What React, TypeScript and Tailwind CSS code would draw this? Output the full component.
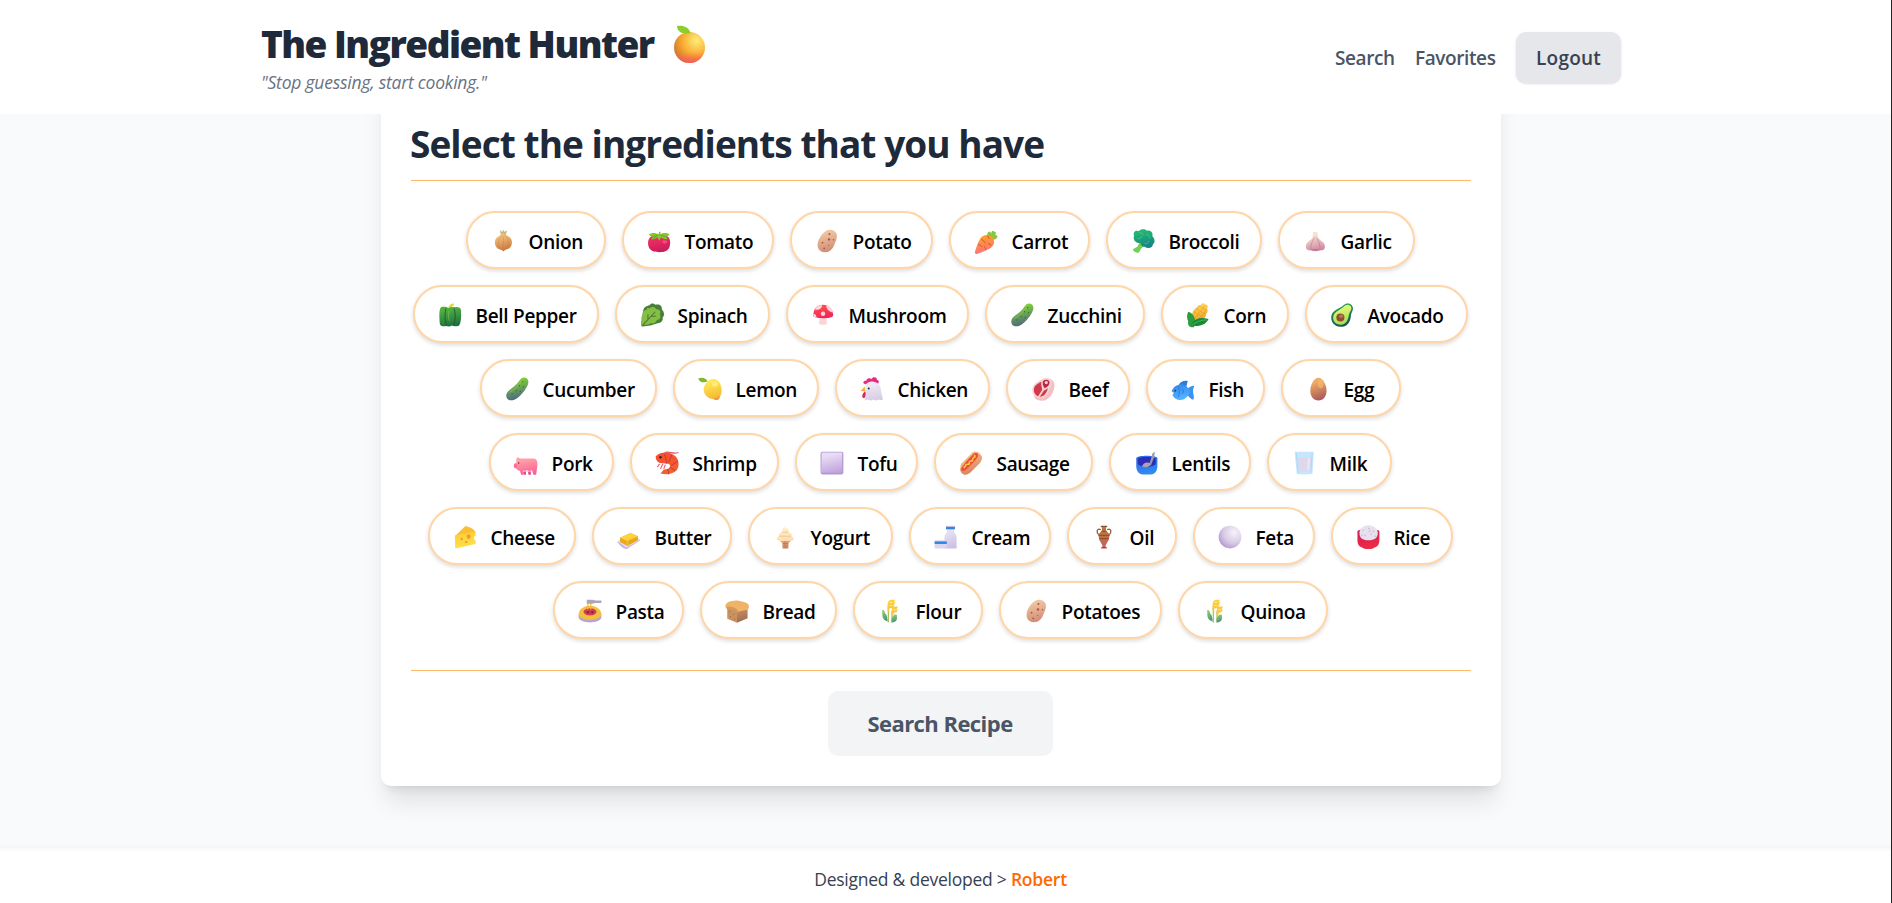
import type { ReactNode } from "react";

const gradients: [string, string, string][] = [
  ["onion", "#f2c079", "#c9733c"],
  ["tomato", "#f0305f", "#c91a5e"],
  ["potato", "#eec3a0", "#cf8a75"],
  ["carrot", "#ff9b2f", "#ff6f86"],
  ["broccoli", "#22b573", "#14808a"],
  ["garlic", "#f6e3d3", "#cf86a3"],
  ["pepper", "#4fae3e", "#1d6d3f"],
  ["cap", "#ff4a4a", "#f0245c"],
  ["cucumber", "#7ccc3a", "#4b5f86"],
  ["corn", "#ffd35a", "#f0a020"],
  ["avocado", "#1f9a4a", "#1c4e63"],
  ["flesh", "#e4f57a", "#a5dc52"],
  ["lemon", "#ffe65a", "#f5b52a"],
  ["chicken", "#efe8f5", "#d5cce2"],
  ["fish", "#3a8ff2", "#55b9ff"],
  ["egg", "#f0ac62", "#a8585a"],
  ["pork", "#ffa0a8", "#fb5f92"],
  ["shrimp", "#f4502f", "#f0642f"],
  ["tofu", "#e9dcf5", "#c0a4dc"],
  ["bun", "#f2b07a", "#d9805f"],
  ["bowl", "#2f6bea", "#2f8ff0"],
  ["cheese", "#ffd03a", "#ffe04f"],
  ["cone", "#e8a878", "#c9805a"],
  ["cream", "#fff0c8", "#ffdcb0"],
  ["jar", "#e6e0f2", "#cbbfe6"],
  ["oil", "#b9783c", "#c8605a"],
  ["rice", "#d61f50", "#f02a45"],
  ["bread", "#c08a60", "#9c6a52"],
  ["wheat", "#ffd23a", "#f3bb3a"],
  ["leaf", "#8bc46a", "#3f8f86"],
];

function Defs() {
  return (
    <svg className="absolute h-0 w-0" aria-hidden="true">
      <defs>
        {gradients.map(([id, from, to]) => (
          <linearGradient key={id} id={id} x1="0.35" y1="0" x2="0.6" y2="1">
            <stop offset="0.15" stopColor={from} />
            <stop offset="1" stopColor={to} />
          </linearGradient>
        ))}
        <radialGradient id="orange" cx="0.72" cy="0.28" r="0.85">
          <stop offset="0" stopColor="#ffee78" />
          <stop offset="0.55" stopColor="#f9a930" />
          <stop offset="1" stopColor="#c8702e" />
        </radialGradient>
        <linearGradient id="blush" x1="0" y1="0" x2="0" y2="1">
          <stop offset="0.65" stopColor="#ff5f5f" stopOpacity="0" />
          <stop offset="1" stopColor="#ff5560" stopOpacity="0.85" />
        </linearGradient>
        <radialGradient id="pearl" cx="0.68" cy="0.3" r="0.75">
          <stop offset="0" stopColor="#f6f2f9" />
          <stop offset="0.6" stopColor="#d8cde6" />
          <stop offset="1" stopColor="#b79bd2" />
        </radialGradient>
      </defs>
    </svg>
  );
}

const potato = (
  <>
    <path d="M15 3.500C19 1 25.500 2 27.500 6.500C29.500 11 27 16 25 20.500C23 26 19 30 13 29.700C7 29.500 3.500 24.500 4.500 19C5.500 13.500 9.500 7 15 3.500Z" fill="url(#potato)" />
    <g fill="#a8583c">
      <circle cx="19" cy="7.500" r="1.200" />
      <circle cx="18.500" cy="14" r="1.500" />
      <circle cx="24" cy="14.500" r="1" />
      <circle cx="10.500" cy="18" r="1.100" />
      <circle cx="12.500" cy="25" r="1.100" />
      <circle cx="18" cy="21.500" r="0.700" />
    </g>
  </>
);

const cucumber = (
  <>
    <path d="M19.500 5C22 1.500 26 1 28.500 3.500C31 6 30 10 28 13.500C25 19 21 23.500 16.500 27C12 30.500 7 31 4 28C1.500 25 3 20 6.500 17.500C12 13.500 16 10.500 19.500 5Z" fill="url(#cucumber)" />
    <g fill="#2f6b34">
      <circle cx="23" cy="7" r="0.800" />
      <circle cx="19" cy="12" r="0.800" />
      <circle cx="24" cy="13" r="0.800" />
      <circle cx="15" cy="18" r="0.800" />
      <circle cx="20" cy="19" r="0.800" />
      <circle cx="10" cy="22" r="0.800" />
    </g>
    <path d="M22 5C18 12 14 16 7 20" stroke="#9fda5a" strokeWidth="1" fill="none" opacity="0.6" />
  </>
);

const wheat = (
  <>
    <path d="M14 30V10M18.500 30V16" stroke="#a9c45a" strokeWidth="1.600" />
    <path d="M6.500 15C8 14 9.500 16 10 19C12 20 13 24 13 29C9 28 6.500 25 6.500 21Z" fill="url(#leaf)" />
    <path d="M18 30C17.500 26 18 23 20 22C21 20 23 20 24.500 21V26C23.500 29 21 30 18 30Z" fill="url(#leaf)" />
    <path d="M13 16V8C13 4 15 2 18 2H22C22 4 21 5 19 5H22C22 7.500 21 9 18.500 9H21C21 11 19.500 12.500 17 12.500L15 13V18Z" fill="url(#wheat)" />
    <path d="M18 21V15C18 12 20 10.500 22 10.500H25.500C25.500 12.500 24.500 13.500 23 14H25.500C25.500 16.500 23.500 18 21 18L20 21Z" fill="#f9c846" />
    <path d="M15.500 5.500H19M15.500 9.500H18.500M20 14.500H23" stroke="#fff0b0" strokeWidth="1" />
  </>
);

const art: Record<string, ReactNode> = {
  onion: (
    <>
      <path d="M12 2.500L15 5L16.500 2L18 5L21 2.500L19.500 9H13.500Z" fill="#d3b37a" />
      <path d="M16.500 6C18 9 27 9.500 27 17.500C27 24 22.500 26.500 18.500 27L16.500 29L14.500 27C10.500 26.500 6 24 6 17.500C6 9.500 15 9 16.500 6Z" fill="url(#onion)" />
      <path d="M15 9C9 14 9 22 14 26M18 9C24 14 24 22 19 26M16.500 10V26" stroke="#b7703a" strokeWidth="0.800" fill="none" opacity="0.450" />
    </>
  ),
  tomato: (
    <>
      <path d="M7 10C12 7 21 7 26 10C30 12 30.500 18 29 23C27.500 28 23 29.700 16.500 29.700C10 29.700 5 28 3.300 23C1.800 18 2.500 12 7 10Z" fill="url(#tomato)" />
      <ellipse cx="23" cy="17" rx="3" ry="2" fill="#ff7294" opacity="0.550" />
      <path d="M15.500 8L16 4.500H18L17.500 8C21 5.500 26 6 29 8C27.500 10 25.500 10.500 24 10.500L27 13.500C23 14.500 20 13 18.500 11.500L16.500 15.500L13.500 11.500C11 14 8 14.500 6.500 13.500L9 10.500C6 10.500 4.500 9.500 3.500 8C7 5.500 12 5.500 15.500 8Z" fill="#82c930" />
      <path d="M9 10.500L14 9L9 13M18 9L24 10.500" stroke="#4d9c28" strokeWidth="0.800" fill="none" />
    </>
  ),
  potato,
  carrot: (
    <>
      <path d="M19 13C17 9 17 5 20 4.500C21 4 22 6 22.500 7C22.500 3.500 25 2.500 26 4.500C28.500 4.500 29 7 27 8.500C30 8.500 31 11 29 12.500C26 15 23 15 19 13Z" fill="#86c83b" />
      <path d="M9 13C12 8 19 7 23.500 11.500C28 16 26 22 21 25C14 29 8 31 4.500 32C2.500 32 2 31 2.500 29C4 24 6 18 9 13Z" fill="url(#carrot)" />
      <path d="M11 14L15 18M18 10L20 13M7 20L11 23M19 19L22 21M14 23L16 26" stroke="#db6230" strokeWidth="1.300" strokeLinecap="round" />
    </>
  ),
  broccoli: (
    <>
      <path d="M13 15L20 20L14 25L11 30C9 31.500 4 29 3.500 26L9 23Z" fill="#74cf58" />
      <path d="M5 9C3 5 8 2 11 4C13 1 19 1 20.500 3.500C25 2 29 6 27.500 10C31 13 31 18 28.500 19.500C28 25 22 26 18 23C15 23 13 21 13 18C8 20 3 15 5 9Z" fill="url(#broccoli)" />
      <path d="M11 6C14 5 16 7 16 9M20 8C24 8 25 11 24 13M9 13C12 14 14 12 14 10M18 19C20 20 23 18 23 16" stroke="#58cf93" strokeWidth="1.100" fill="none" opacity="0.700" />
    </>
  ),
  garlic: (
    <>
      <path d="M13.500 5H19L19.500 12C23 16 27 17 28 21.500C29 26 26 28 22 27.500C18 28.500 14 28.500 10.500 27.500C6 28 4 25 5 21C6 17 11 15 13 12Z" fill="url(#garlic)" />
      <path d="M15 12C13 17 10 20 11 27M18 12C20 17 23 20 22 27" stroke="#a96c80" strokeWidth="1" fill="none" opacity="0.600" />
      <path d="M11 27.500C12 25 20 25 22 27.500C19 29 14 29 11 27.500Z" fill="#b96a8c" opacity="0.600" />
    </>
  ),
  pepper: (
    <>
      <path d="M14 8C14 5 16 2 20 1.500L21 4C18.500 5 18 6 18 9Z" fill="#d7df35" />
      <path d="M5 6.500C8 5.500 12 6 14 7.500C17 6 20 6 22 6.500C25 5.500 29.500 6.500 29.500 10C30 18 29.500 29 26 29.500C23 30 20 30 18.500 29C16 30.500 14 30.500 12 29.500C8 30.500 4 30 3.500 27C3 20 2 9 5 6.500Z" fill="url(#pepper)" />
      <path d="M11 8C9.500 15 9.500 23 12 29M21 8C23 15 23 23 20 29" stroke="#175a34" strokeWidth="1.300" fill="none" opacity="0.8" />
      <path d="M15 11C14 15 14 19 15 23" stroke="#85d666" strokeWidth="1" fill="none" opacity="0.600" />
    </>
  ),
  spinach: (
    <>
      <path d="M13 4C15 0.500 19 2 20 3.500C25 2 29 5 28 9C31 12 32 17 29 19C30 23 27 26 23 26L14 29L4 30C1.500 28 3 26 3 24L5 11C6 6 9 5 13 4Z" fill="#467f3a" />
      <path d="M13 8C16 5 20 6 21 9C25 8 28 12 25.500 15C28 19 25 22 22 22C21 26 17 27 14.500 26C11 28 8 28 6 28L3 30.500C1.500 27 3 25 4 23C2 20 3 17 5 16C3.500 12 7 9 9.500 10C9 7 11 6.500 13 8Z" fill="#85bd45" />
      <path d="M4 29L20 12M11 22V15M15 17.500H21" stroke="#477b2e" strokeWidth="1.300" fill="none" />
    </>
  ),
  mushroom: (
    <>
      <path d="M12 18H20L21 26C20.500 28.500 11.500 28.500 11 26Z" fill="#fbd6d5" />
      <path d="M4 17C4 8 9 3.500 16 3.500C23 3.500 28.500 9 28.500 16.500C28.500 21 4 21 4 17Z" fill="url(#cap)" />
      <path d="M6 9C9 4 12 4 15 4C15 8 10 11 6 9ZM20 4C25 6 28 9 28.500 13C24 12 20 9 20 4ZM4 15C6 14 8 16 8 19C5 19 4 18 4 15Z" fill="#ffd4df" />
      <circle cx="16" cy="14.500" r="2.700" fill="#ffd4df" />
    </>
  ),
  cucumber,
  corn: (
    <>
      <path d="M14 7C16 3 18 4 19 4C21 1 24 1 25 3C28 3 29 6 27 8C29 11 27 14 26 15C26 19 22 22 16 24L9 19C8 14 10 9 14 7Z" fill="url(#corn)" />
      <path d="M13 8L25 15M18 5L26 10M11 12L22 19M25 4L12 20M27 9L17 21M19 4L10 15" stroke="#d88b18" strokeWidth="0.700" opacity="0.7" />
      <path d="M4 12C9 13 12 18 13 24L11 31C5 32 3 28 4 24C2 20 2 16 4 12Z" fill="#2c9c3d" />
      <path d="M8 27C12 20 20 18 29 21C26 28 17 31 8 29Z" fill="#148a3d" />
      <path d="M9 28C15 24 20 22 27 22" stroke="#59ba49" fill="none" />
    </>
  ),
  avocado: (
    <>
      <path d="M18 4C21 1 26 1.500 28 4C30.500 7 29.500 10 28 13C26.500 16 27.500 18 26 22C24 28 19 31 14 30.500C6 30 1.500 23.500 3 16.500C4.500 10 12 9 18 4Z" fill="url(#avocado)" />
      <path d="M19 5C22 2.500 25.500 3.500 27 5.500C28.500 8 27 10 25.500 13C24 16 24.500 18 23 21.500C21 26.500 17 28.500 13.500 28C7 27.500 4 22 5.500 17C7 11.500 14 10 19 5Z" fill="url(#flesh)" />
      <circle cx="14" cy="19" r="5" fill="#89512f" />
      <ellipse cx="15" cy="17.500" rx="2.500" ry="2" fill="#b57a58" />
    </>
  ),
  lemon: (
    <>
      <path d="M11 9C14 3 22 2 26 6C30 10 31 16 30 21C29 25 28 26 27.500 28C26 30 23 30 21 28.500C15 28 10 25 8.500 19C7.500 15 9 12 11 9Z" fill="url(#lemon)" />
      <path d="M20 28C23 27.500 26 26 27.500 24C28 29 24 31.500 20 28Z" fill="#ee9656" />
      <ellipse cx="22" cy="10" rx="3.500" ry="3" fill="#fff37e" opacity="0.800" />
      <path d="M13 6.500C9 9 3 8 1.500 3C6 1 11 2 13 6.500Z" fill="#7fb82b" />
    </>
  ),
  chicken: (
    <>
      <path d="M8 10C3 9 6 5 9 6C9 2 14 2 15 4C17 0 23 1 22 5C25 5 25 8 23 10L19 12Z" fill="#e9297f" />
      <path d="M7 13L2 18.500L8 19Z" fill="#f9b22d" />
      <path d="M7 19C4 22 3 25 5 27C8 28 9 23 8.500 20Z" fill="#dc285f" />
      <path d="M8 12C9 8 14 6.500 18 7C25 8 27 13 27 18L29.500 29C27 31 25 29 24 29C22 31 20 30 18 29C15 31 12 30 11 29L7 30C8 26 8.500 23 8 19Z" fill="url(#chicken)" />
      <circle cx="12" cy="15.500" r="1.200" fill="#2f2338" />
    </>
  ),
  beef: (
    <>
      <path d="M15 4C20 1 29 3 30 10C31 18 24 31 14 30.500C9 30 6 29 5 25Z" fill="#f4bfc2" />
      <path d="M15 4C18 2 24 2 26 6C28 11 25 14 23 18C21 25 16 28 10 27C4 25 2 20 3 15C4 10 9 7 15 4Z" fill="#f7d3cf" />
      <path d="M14 7C11 8.500 6 11 5 15C4 19 6 23 10 25L15 17C15 14 13 11 14 7Z" fill="#d2374c" />
      <path d="M17 18L22 15C20 22 17 25 12 25.500Z" fill="#d2374c" />
      <path d="M16 6C20 3.500 24 5 24 8C24 11 21 14 18 15C16 12 15 9 16 6Z" fill="#b8254a" />
      <circle cx="20" cy="8" r="2" fill="#f7d3cf" />
    </>
  ),
  fish: (
    <>
      <path d="M11 11C12 7 17 5 22 6C20.500 9 21 11 20 13Z" fill="#2b7be0" />
      <path d="M20 18C22 14 26 12 30 12C28 16 28.500 18 28.500 20C28.500 22 30 26 29 29C26 29 23 25 20 22Z" fill="#3a93f0" />
      <path d="M2 19C4 13 9 10 15 10.500C20 11 23 15 24.500 19C23 25 18 29.500 13 29.500C7 29.500 4 26 3 23L5 21Z" fill="url(#fish)" />
      <path d="M10 13C12 16 12 22 10 26M15 16C17 17 17 20 15 22" stroke="#1d68cf" strokeWidth="1" fill="none" opacity="0.8" />
      <circle cx="6.500" cy="18" r="1.200" fill="#163d7c" />
    </>
  ),
  egg: (
    <>
      <path d="M16.500 2C22 2 26.500 11 26.500 18C26.500 25 22.500 30 16.500 30C10.500 30 6.500 25 6.500 18C6.500 11 11 2 16.500 2Z" fill="url(#egg)" />
      <ellipse cx="19.500" cy="10" rx="3.500" ry="5" fill="#ffc178" opacity="0.550" />
    </>
  ),
  pork: (
    <>
      <path d="M12 24H16V30.500H13ZM18 24H22V30.500H19Z" fill="#e74c86" />
      <path d="M4 12L5 9L9 10.500H25C29 10.500 30.500 14 30 19L28.500 30.500H25L23.500 25H14L12.500 30.500H10L8.500 25.500C6 25.500 4.500 24 4.500 23L1.500 21.500V17L4 16Z" fill="url(#pork)" />
      <rect x="1" y="16.500" width="4" height="5.500" rx="2" fill="#fa6c99" />
      <circle cx="7" cy="16" r="0.900" fill="#762044" />
      <path d="M12 26H23" stroke="#ffc0d4" strokeWidth="1.500" />
    </>
  ),
  shrimp: (
    <>
      <path d="M13 3C20 1 23 6 30 3" stroke="#e65872" strokeWidth="1.400" fill="none" />
      <path d="M2 8C6 3 17 1.500 23 5.500C31 9 32 19 28 25C23 30 15 31 8 29L12 24C20 24 22 20 18 17L7 16C3 14 2 11 2 8Z" fill="url(#shrimp)" />
      <path d="M13 5L16 17M22 6L18 15M29 14L21 19M26 25L19 21M18 30L17 23" stroke="#c9303b" strokeWidth="1.100" />
      <path d="M7 17L4 21M11 17L8 23M14 18L12 23" stroke="#f25a62" strokeWidth="1.400" />
      <circle cx="8" cy="9" r="1.500" fill="#331d39" />
    </>
  ),
  tofu: (
    <>
      <rect x="2" y="2" width="28" height="28" rx="2.200" fill="#b397d1" />
      <rect x="3.500" y="3" width="25" height="25" rx="1" fill="url(#tofu)" />
      <path d="M2.800 4V28" stroke="#cdbce0" strokeWidth="1.200" />
    </>
  ),
  sausage: (
    <>
      <path d="M17 4C20 1 25 2 27 5C31 8 30 12 27 16L15 28C11 31 7 31 5 28.500C2 26 2 22 5 18Z" fill="url(#bun)" />
      <path d="M18 3C21 1 24 3 23 6C21 12 13 20 8 22C3 24 2 20 4 17Z" fill="#f3b57d" />
      <path d="M20 4C24 3 26 6 24 9C20 15 14 21 9 25C6 27 3 25 4 22C7 18 15 8 20 4Z" fill="#ea4f3c" />
      <path d="M20 6C23 10 17 8 18 12C19 15 13 12 14 16C15 19 9 16 9 20L7 22" stroke="#ffc93b" strokeWidth="2" fill="none" />
    </>
  ),
  lentils: (
    <>
      <path d="M4 10C5 6 29 6 30 10V19C30 26 27 30 22 30H12C7 30 4 26 4 19Z" fill="url(#bowl)" />
      <path d="M6 11C7 8 27 8 28 11V17C26 22 8 22 6 17Z" fill="#2f2cb5" />
      <path d="M20 18L24 4L27 2L26 9L22 19Z" fill="#989cad" />
      <path d="M11 20C13 15 18 14 22 17C21 21 15 22.500 11 20Z" fill="#a7a5b4" />
    </>
  ),
  milk: (
    <>
      <path d="M4.500 2H28L26.500 29C26 30.500 7.500 30.500 7 29Z" fill="#c4e7fd" />
      <path d="M7.500 9H25L23.500 26C23 27 10.500 27 10 26Z" fill="#dfd7eb" />
      <path d="M22 10L21 25" stroke="#efe8f7" strokeWidth="2" />
      <path d="M6.500 4L9 28M26 4L24.500 28" stroke="#9ed9fa" strokeWidth="1" />
    </>
  ),
  cheese: (
    <>
      <path d="M3.500 15L16.500 2.500C22 4 27 6 29 10Z" fill="#f9bf35" />
      <path d="M3.500 14L29 9.500V24.500L4 30Z" fill="url(#cheese)" />
      <path d="M29.500 14L27 16V19L29.500 20Z" fill="#fff" />
      <g fill="#e6a32a">
        <ellipse cx="20.500" cy="15.500" rx="2.500" ry="3" />
        <circle cx="12" cy="18.500" r="1.500" />
        <circle cx="17.500" cy="22" r="1.500" />
      </g>
    </>
  ),
  butter: (
    <>
      <path d="M1.500 22L18 12L30 20L13 31C9 30 5 27 1.500 22Z" fill="#cbb8df" />
      <path d="M2 21L18 12L30 19L13 29Z" fill="#e9dff1" />
      <path d="M5 17L18 11L27 15V20L14 27L5 22Z" fill="#e9a81d" />
      <path d="M5 17L18 11L27 15L14 21Z" fill="#ffd339" />
      <path d="M14 21V26" stroke="#f4bd27" strokeWidth="2" />
    </>
  ),
  yogurt: (
    <>
      <path d="M9 18H24L22 22.500H20.500L20 30H13L12.500 22.500H11Z" fill="url(#cone)" />
      <path d="M13 24H20M16 21V29" stroke="#b86e54" strokeWidth="0.700" />
      <path d="M16 2L17 5C21 5 21 9 20 10C25 11 25 14 24 15C28 17 27 21 23 21H10C5 20 4.500 16 8.500 15C8 12 10 10 13 10C12 7 13 5 15 5Z" fill="url(#cream)" />
      <path d="M12 10H20M9 15H23" stroke="#ebbf8f" strokeWidth="1" />
    </>
  ),
  cream: (
    <>
      <path d="M17 6H26V10C28 12 29 14 29 17V30H14V17C14 14 15.500 12 17 10Z" fill="url(#jar)" />
      <rect x="15.500" y="2" width="12" height="2" rx="0.700" fill="#d8d0ed" />
      <rect x="16" y="3.500" width="11" height="3" fill="#3484d9" />
      <rect x="2" y="20" width="15" height="10" rx="1" fill="#ddd4ee" />
      <rect x="2" y="21.500" width="15" height="3" fill="#2d82db" />
    </>
  ),
  oil: (
    <>
      <path d="M20 7C25 5 26 10 22 14M12 7C7 5 6 10 10 14" fill="none" stroke="#9b613c" strokeWidth="1.700" />
      <path d="M12 2H20L18.500 5V8L23 13L22 19L18 26V28L20 30H12L14 28V26L10 19L9 13L13.500 8V5Z" fill="url(#oil)" />
      <path d="M12 3H20M13 9H19M9.500 14H22.500M10.500 18H21.500M13 29H19" stroke="#74442f" strokeWidth="1.200" opacity="0.8" />
    </>
  ),
  feta: <ellipse cx="16" cy="16" rx="14" ry="14" fill="url(#pearl)" />,
  rice: (
    <>
      <path d="M3 9C4 5 29 5 30 9V20C30 26 27 28 24 29C22 31.500 11 31.500 9 29C6 28 3 26 3 20Z" fill="url(#rice)" />
      <path d="M5.500 11C5.500 5 11 1.500 16.500 1.500C22 1.500 28 5 28 11C28 17 24 20 16.500 20C9 20 5.500 17 5.500 11Z" fill="#e9e0ef" />
      <path d="M9 9L11 7M16 5L18 6M22 8L23 10M12 13L13 15M19 13L21 12M17 9H19M8 15L9 13M24 15H26" stroke="#b6a3c3" strokeWidth="1" />
    </>
  ),
  pasta: (
    <>
      <path d="M2 20H30V24C28 32 4 32 2 24Z" fill="#b7a4d2" />
      <path d="M2 20C3 6 29 6 30 20C29 29 3 29 2 20Z" fill="#f3bf3e" />
      <path d="M8 17C9 11 23 11 24 17C23 23 9 23 8 17Z" fill="#d33b52" />
      <path d="M13.500 4V14M17 4V14" stroke="#f7b942" strokeWidth="1.500" />
      <path d="M12 2H19L23 3H30V6H22L19 7H12Z" fill="#b0a4ba" />
      <circle cx="13.500" cy="17.500" r="1.500" fill="#8c2440" />
      <circle cx="19" cy="17.500" r="1.500" fill="#8c2440" />
    </>
  ),
  bread: (
    <>
      <path d="M14 13H29V25L16 30.500Z" fill="url(#bread)" />
      <path d="M4 12L16 14V30.500L4 25.500Z" fill="#c9925f" />
      <path d="M2 8C4 4 12 3 16 3C22 4 28 5 30 8C31.500 11 30.500 13.500 29 14.500L17 17C16.500 13 9 11 2.500 12C1.500 11 1.500 9.500 2 8Z" fill="#f0b468" />
      <path d="M2.500 11C8 9 17 12 17.500 17L16 19V17C12 14 7 13 3.500 14Z" fill="#d79a5c" />
      <g fill="#94643f">
        <circle cx="7" cy="17" r="0.700" />
        <circle cx="12" cy="20" r="0.700" />
        <circle cx="8" cy="23" r="0.700" />
        <circle cx="13" cy="26" r="0.700" />
      </g>
    </>
  ),
  wheat,
};

type Item = { name: string; icon: string; width: string };

const rows: Item[][] = [
  [
    { name: "Onion", icon: "onion", width: "w-[140px]" },
    { name: "Tomato", icon: "tomato", width: "w-[152px]" },
    { name: "Potato", icon: "potato", width: "w-[143px]" },
    { name: "Carrot", icon: "carrot", width: "w-[141px]" },
    { name: "Broccoli", icon: "broccoli", width: "w-[156px]" },
    { name: "Garlic", icon: "garlic", width: "w-[137px]" },
  ],
  [
    { name: "Bell Pepper", icon: "pepper", width: "w-[186px]" },
    { name: "Spinach", icon: "spinach", width: "w-[155px]" },
    { name: "Mushroom", icon: "mushroom", width: "w-[183px]" },
    { name: "Zucchini", icon: "cucumber", width: "w-[160px]" },
    { name: "Corn", icon: "corn", width: "w-[128px]" },
    { name: "Avocado", icon: "avocado", width: "w-[163px]" },
  ],
  [
    { name: "Cucumber", icon: "cucumber", width: "w-[177px]" },
    { name: "Lemon", icon: "lemon", width: "w-[146px]" },
    { name: "Chicken", icon: "chicken", width: "w-[155px]" },
    { name: "Beef", icon: "beef", width: "w-[124px]" },
    { name: "Fish", icon: "fish", width: "w-[119px]" },
    { name: "Egg", icon: "egg", width: "w-[120px]" },
  ],
  [
    { name: "Pork", icon: "pork", width: "w-[125px]" },
    { name: "Shrimp", icon: "shrimp", width: "w-[149px]" },
    { name: "Tofu", icon: "tofu", width: "w-[123px]" },
    { name: "Sausage", icon: "sausage", width: "w-[159px]" },
    { name: "Lentils", icon: "lentils", width: "w-[142px]" },
    { name: "Milk", icon: "milk", width: "w-[125px]" },
  ],
  [
    { name: "Cheese", icon: "cheese", width: "w-[148px]" },
    { name: "Butter", icon: "butter", width: "w-[140px]" },
    { name: "Yogurt", icon: "yogurt", width: "w-[145px]" },
    { name: "Cream", icon: "cream", width: "w-[142px]" },
    { name: "Oil", icon: "oil", width: "w-[110px]" },
    { name: "Feta", icon: "feta", width: "w-[122px]" },
    { name: "Rice", icon: "rice", width: "w-[122px]" },
  ],
  [
    { name: "Pasta", icon: "pasta", width: "w-[131px]" },
    { name: "Bread", icon: "bread", width: "w-[137px]" },
    { name: "Flour", icon: "wheat", width: "w-[130px]" },
    { name: "Potatoes", icon: "potato", width: "w-[163px]" },
    { name: "Quinoa", icon: "wheat", width: "w-[150px]" },
  ],
];

function Chip({ name, icon, width }: Item) {
  return (
    <button
      className={`${width} flex h-[58px] shrink-0 items-center gap-[13px] rounded-full border-2 border-[#ffd6a7] bg-white pl-[22px] text-[19px] font-semibold tracking-[-0.3px] whitespace-nowrap text-black shadow-[0_2px_4px_rgba(0,0,0,0.14)]`}
    >
      <svg viewBox="0 0 32 32" className="mt-0.5 size-[26px] shrink-0">
        {art[icon]}
      </svg>
      <span className="mt-1">{name}</span>
    </button>
  );
}

export default function App() {
  return (
    <div className="flex h-[903px] w-[1892px] flex-col overflow-hidden border-r border-[#222] bg-[#f9fafb] font-['Open_Sans','Noto_Sans',sans-serif]">
      <Defs />
      <header className="z-10 flex h-[114px] shrink-0 justify-center bg-white pr-[9px]">
        <div className="flex w-[1360px] items-start justify-between">
          <div className="pt-[22px]">
            <h1 className="flex h-11 items-center text-[37px] font-extrabold tracking-[-1.53px] whitespace-nowrap text-[#1e2939]">
              <span className="w-[412px]">The Ingredient Hunter</span>
              <svg viewBox="0 0 32 38" className="h-[38px] w-8">
                <circle cx="16.500" cy="22.500" r="15.500" fill="url(#orange)" />
                <circle cx="16.500" cy="22.500" r="15.500" fill="url(#blush)" />
                <path d="M4 1C10 0 16 2 17.500 8C12 10 4 8 4 1Z" fill="#8ccf2c" />
              </svg>
            </h1>
            <p className="mt-[2px] text-[17.5px] leading-7 tracking-[-0.22px] whitespace-nowrap text-[#6a7282] italic">
              "Stop guessing, start cooking."
            </p>
          </div>
          <nav className="mt-8 flex items-center text-[19px] font-semibold tracking-[-0.4px] text-[#4a5565]">
            <a className="w-20 pt-0.5">Search</a>
            <a className="w-[101px] pt-0.5">Favorites</a>
            <button className="h-[51px] w-[105px] rounded-[10px] bg-[#e5e7eb] pt-0.5 tracking-[0.2px] text-[#364153] shadow-sm">
              Logout
            </button>
          </nav>
        </div>
      </header>

      <main className="flex h-[732px] shrink-0 justify-center pr-[9px]">
        <section className="-mt-10 flex h-[712px] w-[1120px] flex-col rounded-[10px] bg-white px-[30px] pt-10 shadow-[0_20px_25px_-5px_rgba(0,0,0,0.1),0_8px_10px_-6px_rgba(0,0,0,0.1)]">
          <h2 className="flex h-[67px] items-center border-b border-[#ffb86a] pb-[6px] text-[37px] font-bold tracking-[-0.94px] whitespace-nowrap text-[#1e2939]">
            <span className="-ml-px">Select the ingredients that you have</span>
          </h2>
          <div className="mt-[30px] flex flex-col gap-4 pr-[2px]">
            {rows.map((row) => (
              <div key={row[0].name} className="flex justify-center gap-4">
                {row.map((item) => (
                  <Chip key={item.name} {...item} />
                ))}
              </div>
            ))}
          </div>
          <div className="mt-[31px] flex justify-center border-t border-[#ffb86a] pt-5 pr-[2px]">
            <button className="h-[65px] w-[225px] rounded-[10px] bg-[#f3f4f6] text-[22px] font-bold tracking-[-0.55px] text-[#4a5565]">
              Search Recipe
            </button>
          </div>
        </section>
      </main>

      <footer className="flex h-[57px] shrink-0 justify-center bg-white bg-linear-to-b from-[#f3f4f6] to-white to-[6px] pt-5 pr-[10px] text-[17.5px] leading-[26px] tracking-[-0.24px] whitespace-pre text-[#364153]">
        <span>{"Designed & developed > "}</span>
        <a className="font-semibold text-[#ff6900]">Robert</a>
      </footer>
    </div>
  );
}
